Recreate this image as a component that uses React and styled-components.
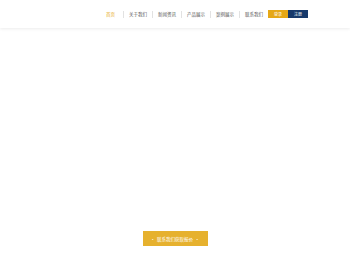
import React from 'react';
import styled, { createGlobalStyle } from 'styled-components';

const GlobalStyle = createGlobalStyle`
  html, body {
    margin: 0;
    padding: 0;
    background: #ffffff;
  }
  body {
    font-family: "Noto Sans CJK SC", "Noto Sans", sans-serif;
  }
`;

const Page = styled.div`
  width: 350px;
  height: 263px;
  display: flex;
  flex-direction: column;
  overflow: hidden;
`;

const Header = styled.header`
  height: 28px;
  display: flex;
  align-items: center;
  justify-content: flex-end;
  padding-right: 42px;
  background: #ffffff;
  box-shadow: 0 1px 3px rgba(0, 0, 0, 0.08);
  position: relative;
  z-index: 1;
`;

const Nav = styled.nav`
  display: flex;
  align-items: center;
`;

const NavItem = styled.a`
  font-size: 4.5px;
  line-height: 7px;
  padding: ${props => (props.first ? '0 8px 0 5px' : '0 5px')};
  color: ${props => (props.active ? '#e6a817' : '#555555')};
  border-left: ${props => (props.first ? 'none' : '1px solid #e2e2e2')};
  white-space: nowrap;
  cursor: pointer;
`;

const AuthGroup = styled.div`
  display: flex;
`;

const AuthButton = styled.button`
  width: 20px;
  height: 8px;
  border: none;
  padding: 0;
  font-family: inherit;
  font-size: 4px;
  line-height: 8px;
  color: #ffffff;
  background: ${props => (props.primary ? '#e6a817' : '#16396b')};
  cursor: pointer;
`;

const Main = styled.main`
  flex: 1;
  display: flex;
  flex-direction: column;
  align-items: center;
  justify-content: flex-end;
  padding-bottom: 17px;
`;

const QuoteButton = styled.button`
  width: 65px;
  height: 15px;
  border: none;
  padding: 0;
  background: #e6b12e;
  color: #ffffff;
  font-family: inherit;
  font-size: 4.5px;
  display: flex;
  align-items: center;
  justify-content: center;
  gap: 2px;
  cursor: pointer;
`;

const navItems = ['首页', '关于我们', '新闻资讯', '产品展示', '案例展示', '联系我们'];

export default function App() {
  return (
    <Page>
      <GlobalStyle />
      <Header>
        <Nav>
          {navItems.map((item, i) => (
            <NavItem key={item} active={i === 0} first={i === 0}>
              {item}
            </NavItem>
          ))}
        </Nav>
        <AuthGroup>
          <AuthButton primary>登录</AuthButton>
          <AuthButton>注册</AuthButton>
        </AuthGroup>
      </Header>
      <Main>
        <QuoteButton>
          <span>·</span>
          <span>联系我们获取报价</span>
          <span>·</span>
        </QuoteButton>
      </Main>
    </Page>
  );
}
